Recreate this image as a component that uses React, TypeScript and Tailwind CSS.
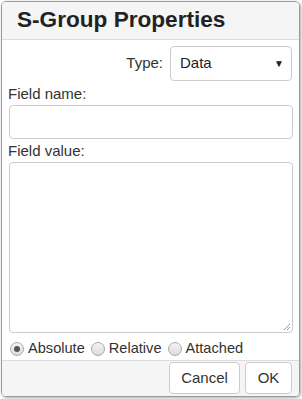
import React from "react";

const Radio = ({ checked, label }: { checked?: boolean; label: string }) => (
  <label className="flex items-center gap-[4px]">
    <span className="w-[14px] h-[14px] rounded-full border border-[#a9a9a9] bg-gradient-to-b from-[#f4f4f4] to-[#dcdcdc] flex items-center justify-center">
      {checked && <span className="w-[6px] h-[6px] rounded-full bg-[#555]" />}
    </span>
    <span>{label}</span>
  </label>
);

const App = () => {
  return (
    <div className="w-[302px] h-[399px] bg-white p-px" style={{ fontFamily: '"Liberation Sans", Arial, sans-serif' }}>
      <div className="w-[299px] h-[396px] flex flex-col border border-[#9a9a9a] rounded-[5px] overflow-hidden shadow-[1px_1px_3px_rgba(0,0,0,0.35)] text-[#333]">
        <div className="h-[40px] bg-[#f5f5f5] border-b border-[#dcdcdc] flex items-center pl-[15px]">
          <h1 className="text-[22.6px] font-bold text-[#222] leading-none">S-Group Properties</h1>
        </div>
        <div className="flex-1 bg-white flex flex-col px-[6px] pt-[6px] text-[15px]">
          <div className="flex items-center justify-end gap-[7px] pr-[1px]">
            <span>Type:</span>
            <div className="w-[122px] h-[35px] border border-[#ccc] rounded-[4px] flex items-center justify-between pl-[9px] pr-[7px] text-[#222]">
              <span>Data</span>
              <span className="text-[10px]">▼</span>
            </div>
          </div>
          <div className="mt-[5px] leading-[16px]">Field name:</div>
          <div className="mt-[3px] ml-[1px] h-[34px] border border-[#ccc] rounded-[4px]" />
          <div className="mt-[4px] leading-[16px]">Field value:</div>
          <div className="mt-[3px] ml-[1px] h-[171px] border border-[#ccc] rounded-[4px] relative">
            <svg className="absolute right-[1px] bottom-[1px]" width="9" height="9" viewBox="0 0 9 9">
              <path d="M8 2 L2 8 M8 5 L5 8" stroke="#999" strokeWidth="1" />
            </svg>
          </div>
          <div className="flex items-center gap-[6px] mt-[5px] ml-[2px] text-[14.6px]">
            <Radio checked label="Absolute" />
            <Radio label="Relative" />
            <Radio label="Attached" />
          </div>
        </div>
        <div className="h-[38px] bg-[#f5f5f5] border-t border-[#dcdcdc] flex items-center justify-end gap-[5px] pr-[7px] text-[15px] text-[#333]">
          <button className="h-[32px] w-[71px] bg-white border border-[#ccc] rounded-[4px]">Cancel</button>
          <button className="h-[32px] w-[47px] bg-white border border-[#ccc] rounded-[4px]">OK</button>
        </div>
      </div>
    </div>
  );
};

export default App;
